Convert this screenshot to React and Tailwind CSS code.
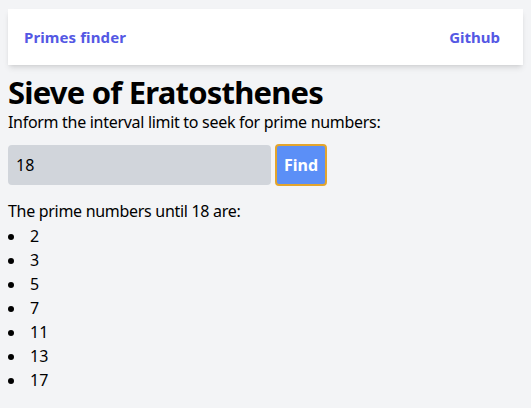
export default function App() {
  const primes = [2, 3, 5, 7, 11, 13, 17];
  return (
    <div className="min-h-[408px] bg-[#f3f4f6] px-2 pt-[9px] text-black" style={{ fontFamily: '"Noto Sans", sans-serif' }}>
      <nav className="flex h-[56px] items-center justify-between bg-white pl-4 pr-[23px] shadow-md">
        <span className="text-[15px] font-bold tracking-[0.1px] text-[#5458e4]">Primes finder</span>
        <span className="text-[15px] font-bold text-[#5458e4]">Github</span>
      </nav>
      <h1 className="mt-[9px] text-[31px] font-bold leading-[36px] tracking-[-0.8px]">Sieve of Eratosthenes</h1>
      <p className="text-[16px] leading-[24px] tracking-[-0.3px]">Inform the interval limit to seek for prime numbers:</p>
      <div className="mt-[10px] flex items-center gap-1">
        <div className="flex h-[40px] w-[263px] items-center rounded bg-[#d1d5db] px-2 text-[16px]">18</div>
        <button className="h-[42px] w-[52px] rounded border-2 border-[#e3a52d] bg-[#5b8ff7] text-[16px] font-bold text-white">Find</button>
      </div>
      <p className="mt-[13px] text-[16px] leading-[24px] tracking-[-0.3px]">The prime numbers until 18 are:</p>
      <ul className="mt-[1px] list-disc pl-[18px] text-[16px] leading-[24px]">
        {primes.map((p) => (
          <li key={p} className="pl-[4px]">{p}</li>
        ))}
      </ul>
    </div>
  );
}
